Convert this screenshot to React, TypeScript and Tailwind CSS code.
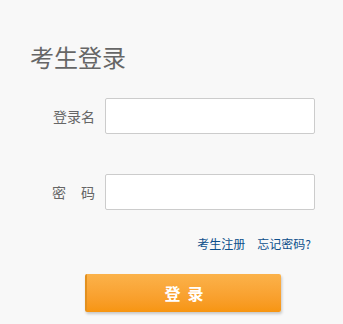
export default function App() {
  return (
    <div
      className="w-[343px] h-[324px] bg-[#f8f8f8] overflow-hidden"
      style={{ fontFamily: '"Noto Sans CJK SC", "Liberation Sans", sans-serif' }}
    >
      <h1 className="pl-[30px] pt-[43px] text-[24px] leading-[28px] text-[#666] font-normal">
        考生登录
      </h1>

      <div className="mt-[27px] flex items-center">
        <label className="w-[95px] text-right text-[14px] text-[#666]">登录名</label>
        <input
          type="text"
          className="ml-[10px] w-[210px] h-[36px] bg-white border border-[#ccc] rounded-[2px] outline-none"
        />
      </div>

      <div className="mt-[40px] flex items-center">
        <label className="w-[95px] flex justify-end text-[14px] text-[#666]">
          <span>密</span>
          <span className="ml-[15px]">码</span>
        </label>
        <input
          type="password"
          className="ml-[10px] w-[210px] h-[36px] bg-white border border-[#ccc] rounded-[2px] outline-none"
        />
      </div>

      <div className="mt-[26px] flex justify-end gap-[12px] pr-[32px] text-[12px] leading-[16px] text-[#0d4f8b]">
        <a>考生注册</a>
        <a>忘记密码?</a>
      </div>

      <div className="mt-[22px] pl-[85px]">
        <button className="w-[196px] h-[38px] flex items-center justify-center bg-gradient-to-b from-[#fbb24a] to-[#f7950f] border-l-2 border-[#e2901f] rounded-[2px] shadow-[1px_2px_3px_rgba(0,0,0,0.2)] text-white text-[16px] font-bold">
          <span>登</span>
          <span className="ml-[7px]">录</span>
        </button>
      </div>
    </div>
  );
}
